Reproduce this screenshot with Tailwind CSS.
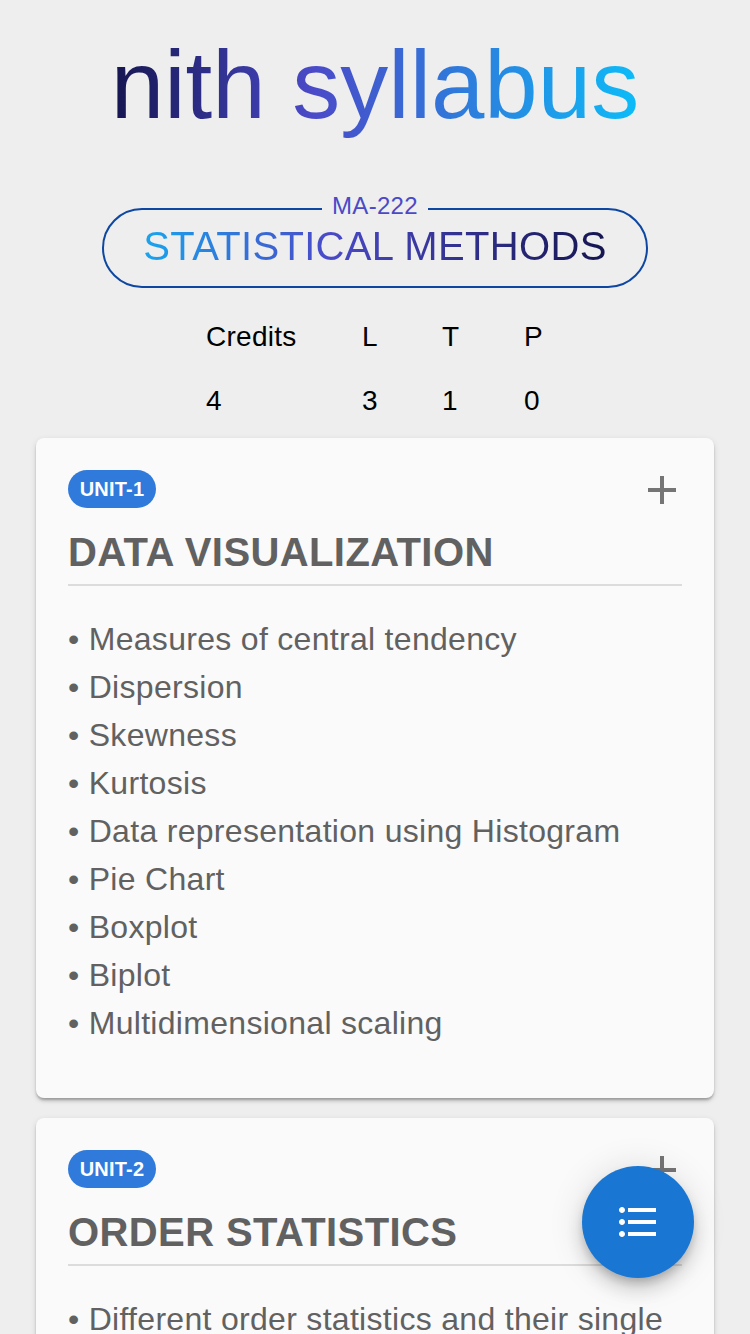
<!DOCTYPE html>
<html lang="en">
<head>
<meta charset="utf-8">
<title>nith syllabus</title>
<script src="https://cdn.jsdelivr.net/npm/@tailwindcss/browser@4"></script>
</head>
<body class="h-[1334px] overflow-hidden bg-[#eeeeee] font-['Liberation_Sans',Arial,sans-serif] text-black">
<header class="flex h-[208px] justify-center pt-[27px]">
<h1 class="h-[120px] bg-[linear-gradient(90deg,#151550_0%,#4a4ac8_38%,#2f7adb_66%,#0cbcf8_100%)] bg-clip-text text-[96px] leading-[115px] whitespace-nowrap text-transparent">nith syllabus</h1>
</header>
<section class="relative mx-auto flex h-[80px] w-[546px] justify-center rounded-[40px] border-2 border-[#0d47a1]">
<span class="absolute top-[-18px] bg-[#eeeeee] px-[10px] text-[24px] leading-[28px] tracking-[0.3px] text-[#4a4ac8]">MA-222</span>
<h2 class="mt-[12px] h-[48px] bg-[linear-gradient(90deg,#18a5ee_0%,#2f7adb_18%,#4a4ac8_40%,#151550_100%)] bg-clip-text text-[40px] leading-[48px] tracking-[0.33px] whitespace-nowrap text-transparent">STATISTICAL METHODS</h2>
</section>
<div class="ml-[206px] grid grid-cols-[156px_80px_82px_60px] pt-[17px] text-[28px] leading-[64px] tracking-[0.28px]">
<span>Credits</span><span>L</span><span>T</span><span>P</span>
<span>4</span><span>3</span><span>1</span><span>0</span>
</div>
<main class="mt-[5px] flex flex-col gap-5 px-9 text-[#616161]">
<article class="h-[660px] rounded-[8px] bg-[#fafafa] px-8 pt-8 shadow-[0_4px_4px_-2px_rgba(0,0,0,0.2),0_2px_2px_rgba(0,0,0,0.14),0_2px_6px_rgba(0,0,0,0.12)]">
<div class="flex items-start justify-between">
<span class="flex h-[38px] w-[88px] items-center justify-center rounded-[19px] bg-[#2f7adb] text-[20px] font-bold tracking-[0.2px] text-white">UNIT-1</span>
<svg class="mt-[6px] mr-[6px]" width="28" height="28" fill="none" stroke="#757575" stroke-width="4"><path d="M14 0v28M0 14h28"/></svg>
</div>
<h3 class="mt-[20px] h-[58px] w-[614px] border-b-2 border-[#dcdcdc] text-[40px] leading-[48px] font-bold tracking-[0.4px]">DATA VISUALIZATION</h3>
<div class="mt-[29px] text-[32px] leading-[48px] tracking-[0.3px]">
<p>• Measures of central tendency</p><p>• Dispersion</p><p>• Skewness</p><p>• Kurtosis</p><p>• Data representation using Histogram</p><p>• Pie Chart</p><p>• Boxplot</p><p>• Biplot</p><p>• Multidimensional scaling</p>
</div>
</article>
<article class="h-[660px] rounded-[8px] bg-[#fafafa] px-8 pt-8 shadow-[0_4px_4px_-2px_rgba(0,0,0,0.2),0_2px_2px_rgba(0,0,0,0.14),0_2px_6px_rgba(0,0,0,0.12)]">
<div class="flex items-start justify-between">
<span class="flex h-[38px] w-[88px] items-center justify-center rounded-[19px] bg-[#2f7adb] text-[20px] font-bold tracking-[0.2px] text-white">UNIT-2</span>
<svg class="mt-[6px] mr-[6px]" width="28" height="28" fill="none" stroke="#757575" stroke-width="4"><path d="M14 0v28M0 14h28"/></svg>
</div>
<h3 class="mt-[20px] h-[58px] w-[614px] border-b-2 border-[#dcdcdc] text-[40px] leading-[48px] font-bold tracking-[0.4px]">ORDER STATISTICS</h3>
<div class="mt-[29px] text-[32px] leading-[48px] tracking-[0.3px]"><p>• Different order statistics and their single</p></div>
</article>
</main>
<button class="fixed top-[1166px] left-[582px] flex size-[112px] items-center justify-center rounded-full bg-[#1976d2] shadow-[0_6px_10px_-2px_rgba(0,0,0,0.2),0_12px_20px_rgba(0,0,0,0.14),0_2px_36px_rgba(0,0,0,0.12)]" aria-label="Contents">
<svg width="48" height="48" viewBox="0 0 24 24" fill="white"><path d="M4 10.5c-.83 0-1.5.67-1.5 1.5s.67 1.5 1.5 1.5 1.5-.67 1.5-1.5-.67-1.5-1.5-1.5zm0-6c-.83 0-1.5.67-1.5 1.5S3.17 7.500 4 7.500 5.500 6.830 5.500 6 4.830 4.500 4 4.500zm0 12c-.83 0-1.5.68-1.5 1.500s.68 1.500 1.500 1.500 1.500-.68 1.500-1.500-.67-1.500-1.500-1.500zM7 19h14v-2H7v2zm0-6h14v-2H7v2zm0-8v2h14V5H7z"/></svg>
</button>
</body>
</html>
